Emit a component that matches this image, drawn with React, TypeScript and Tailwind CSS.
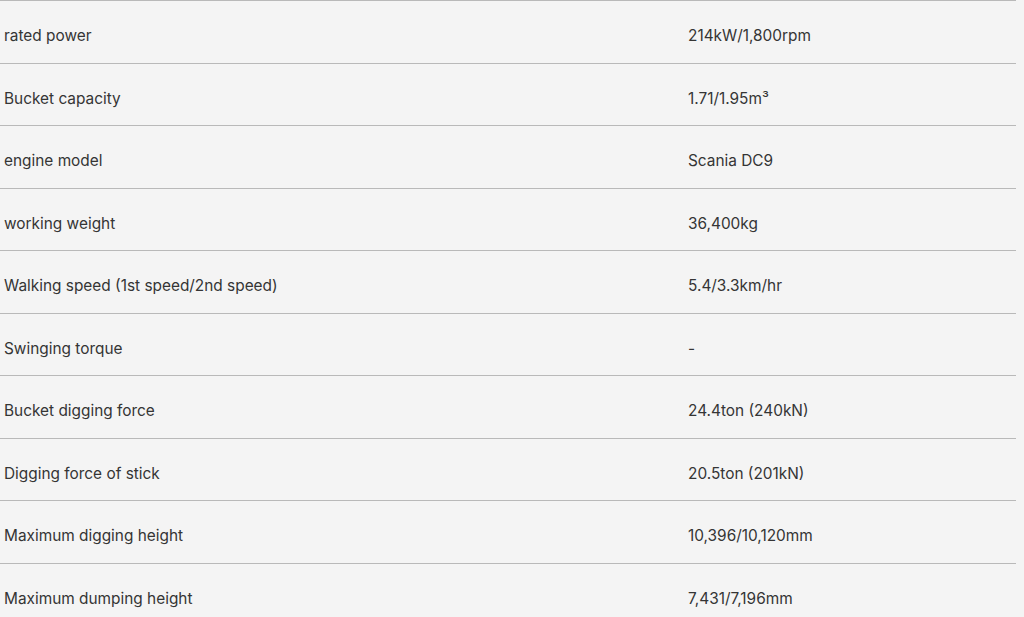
const specs: [string, string][] = [
  ["rated power", "214kW/1,800rpm"],
  ["Bucket capacity", "1.71/1.95m³"],
  ["engine model", "Scania DC9"],
  ["working weight", "36,400kg"],
  ["Walking speed (1st speed/2nd speed)", "5.4/3.3km/hr"],
  ["Swinging torque", "-"],
  ["Bucket digging force", "24.4ton (240kN)"],
  ["Digging force of stick", "20.5ton (201kN)"],
  ["Maximum digging height", "10,396/10,120mm"],
  ["Maximum dumping height", "7,431/7,196mm"],
];

export default function App() {
  return (
    <div className="h-[617px] w-[1024px] overflow-hidden bg-[#f4f4f4] font-['Inter',sans-serif] text-[15.4px] text-[#353535]">
      <div className="w-[1016px]">
        {specs.map(([label, value]) => (
          <div
            key={label}
            className="flex h-[62.5px] items-center border-t border-[#b9b9b9] pt-2"
          >
            <div className="w-[688px] pl-1">{label}</div>
            <div>{value}</div>
          </div>
        ))}
      </div>
    </div>
  );
}
